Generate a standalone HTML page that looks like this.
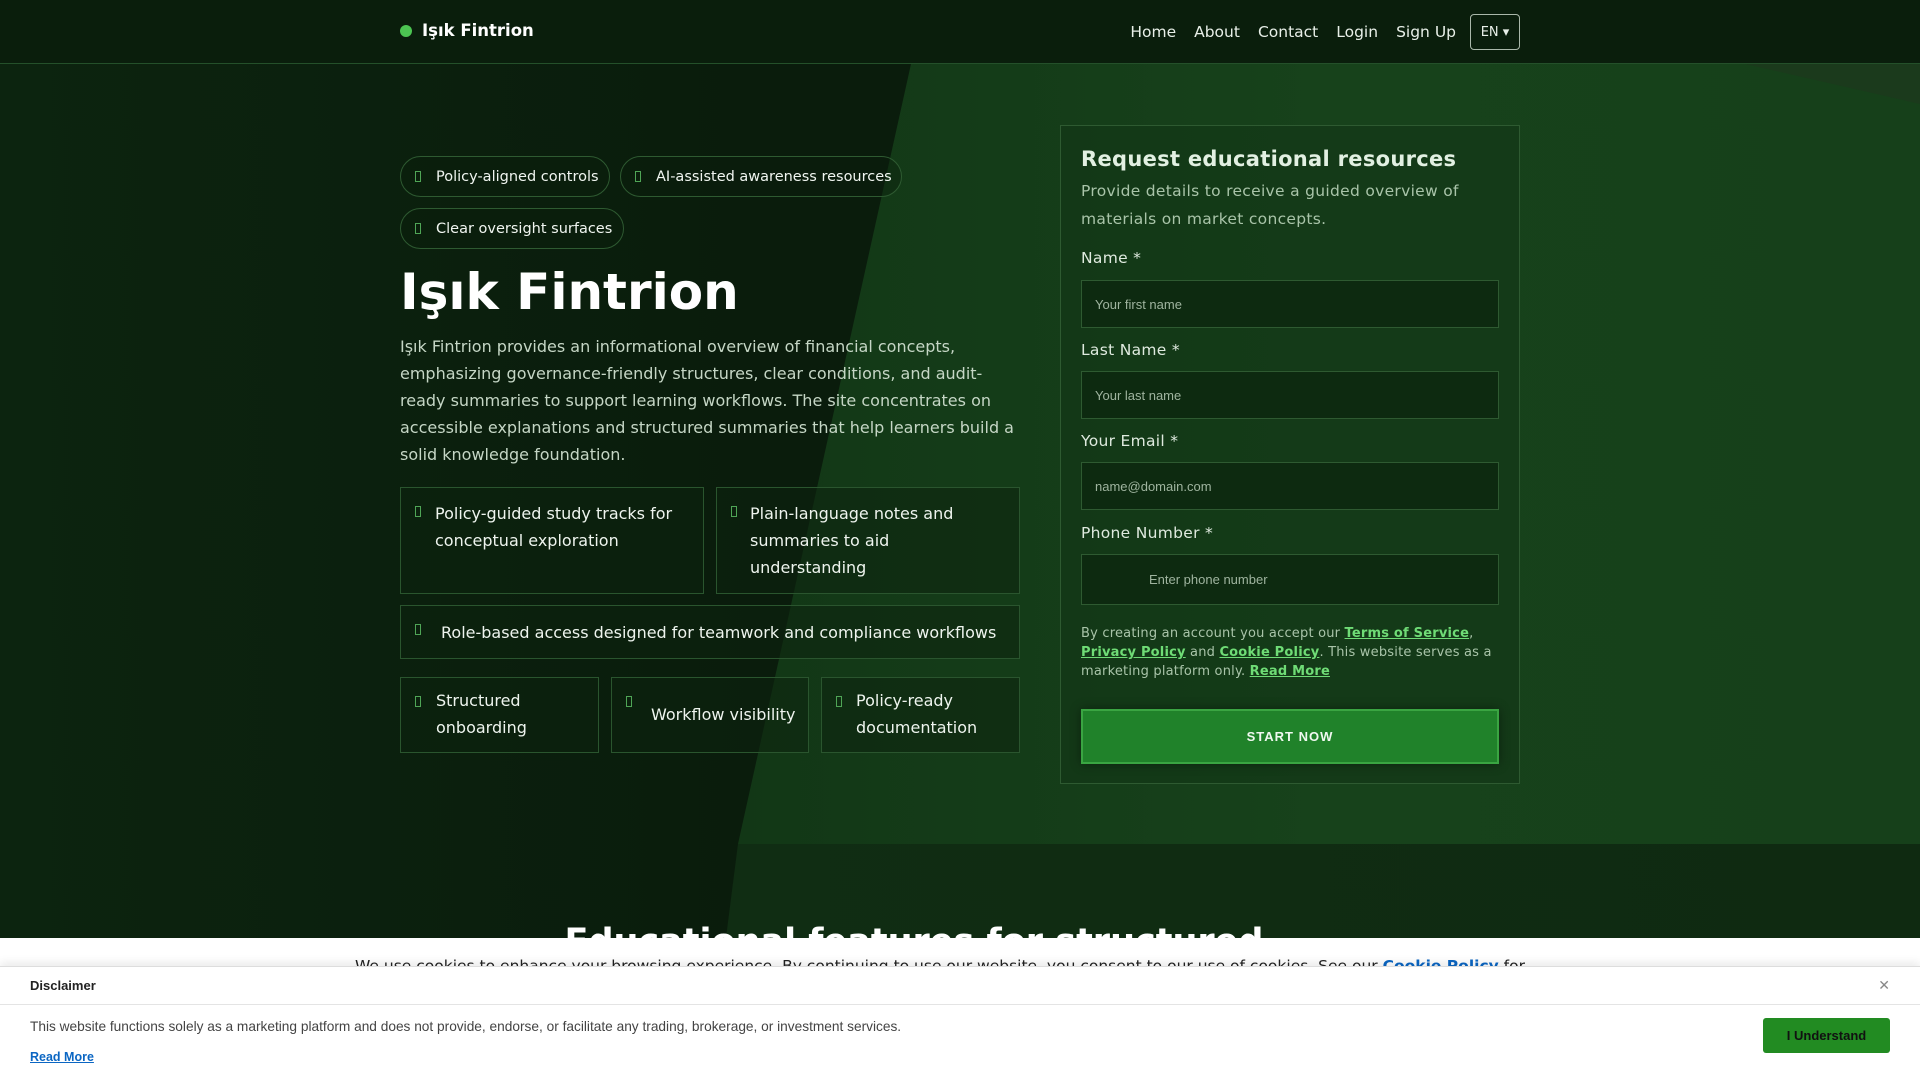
<!DOCTYPE html>
<html><head><meta charset="utf-8"><style>
*{box-sizing:border-box;margin:0;padding:0}
body{width:1920px;height:1080px;overflow:hidden;background:#0c220e;font-family:"DejaVu Sans","Liberation Sans",sans-serif;color:#e6f0e6;position:relative}
.hdr{position:absolute;top:0;left:0;width:1920px;height:64px;background:#0a1e0c;border-bottom:1px solid #24502a;z-index:3}
.logo{position:absolute;left:400px;top:21px;font-weight:bold;font-size:16.5px;color:#fff;display:flex;align-items:center}
.logo i{width:12px;height:12px;border-radius:50%;background:#4cc552;margin-right:10px;display:inline-block}
.nav{position:absolute;right:400px;top:14px;display:flex;align-items:center;font-size:15.5px;color:#e8efe8}
.nav span{margin-left:18px}
.nav .en{border:1px solid #aab8aa;border-radius:4px;width:50px;height:36px;font-size:13px;display:flex;align-items:center;justify-content:center;margin-left:14px}
.bg{position:absolute;top:64px;left:0;width:1920px;height:874px;overflow:hidden;background:linear-gradient(90deg,#0c240f 0%,#0a1c0c 40%)}
.bg svg{position:absolute;left:0;top:0}
.pill{position:absolute;height:41px;border:1px solid #2e5a31;border-radius:21px;font-size:14.5px;color:#f0f5f0;display:flex;align-items:center;padding-left:35px;background:rgba(10,30,12,.4)}
.pill:before,.fb:before{content:"";position:absolute;left:14px;width:4px;height:9px;border:1px solid #4fa556}
h1{position:absolute;left:400px;top:263px;font-size:50px;font-weight:bold;color:#fff}
.p{position:absolute;left:400px;top:333px;width:620px;font-size:16px;line-height:27px;color:#c5d6c5}
.fb{position:absolute;border:1px solid #2a552e;background:rgba(12,35,14,.55);font-size:16px;line-height:27px;color:#eef4ee}
.fb:before{top:18px}
.card{position:absolute;left:1060px;top:125px;width:460px;height:659px;border:1px solid #2e5a31;background:rgba(18,52,21,.55);padding:21px 20px}
.card h2{font-size:21px;font-weight:bold;color:#e2f0e2;letter-spacing:.3px}
.card .sub{font-size:15.5px;line-height:28px;color:#a9c4a9;margin-top:6px;letter-spacing:.3px}
.lbl{position:absolute;left:20px;font-size:15.5px;color:#dfeadf;letter-spacing:.3px}
.inp{position:absolute;left:20px;width:418px;border:1px solid #2e5a31;background:#0d2a10;font-family:"Liberation Sans",sans-serif;font-size:13px;color:#9fb49f;padding-left:13px;display:flex;align-items:center}
.terms{position:absolute;left:20px;top:498px;width:420px;font-size:13px;line-height:19px;color:#a9c4a9;letter-spacing:.2px}
.terms b{color:#6fdc76;text-decoration:underline}
.btn{position:absolute;left:20px;top:583px;width:418px;height:55px;background:#20822a;border:2px solid #3aa542;color:#f0f8f0;font-family:"Liberation Sans",sans-serif;font-weight:bold;font-size:13px;letter-spacing:1px;display:flex;align-items:center;justify-content:center;box-shadow:0 0 10px rgba(0,0,0,.4)}
.sec{position:absolute;top:922px;left:0;width:1828px;text-align:center;font-size:35px;font-weight:bold;color:#fff}
.ck{position:absolute;top:938px;left:0;width:1920px;height:142px;background:#fff}
.ck .t{position:absolute;top:19px;left:0;width:1880px;text-align:center;font-size:15.5px;color:#222}
.ds{position:absolute;top:966px;left:0;width:1920px;height:114px;background:#fff;border-top:1px solid #ddd;box-shadow:0 -4px 8px rgba(0,0,0,.08);font-family:"Liberation Sans",sans-serif}
.ds .hd{height:38px;border-bottom:1px solid #e4e4e4;font-weight:bold;font-size:13px;color:#222;padding:11px 30px}
.ds .x{position:absolute;right:30px;top:10px;color:#888;font-size:14px}
.ds .bd{position:absolute;left:30px;top:52px;font-size:13.7px;color:#444}
.ds .rm{position:absolute;left:30px;top:83px;font-size:12.5px;font-weight:bold;color:#0b66c3;text-decoration:underline}
.ds .ok{position:absolute;left:1763px;top:51px;width:127px;height:35px;background:#228b22;border-radius:3px;font-weight:bold;font-size:13px;color:#111;display:flex;align-items:center;justify-content:center}
</style></head><body>
<div class="hdr"><div class="logo"><i></i>Işık Fintrion</div>
<div class="nav"><span>Home</span><span>About</span><span>Contact</span><span>Login</span><span>Sign Up</span><div class="en">EN ▾</div></div></div>
<div class="bg">
<svg width="1920" height="874">
<defs><linearGradient id="g" x1="0" y1="0" x2="1" y2="0"><stop offset="0" stop-color="#123716"/><stop offset=".5" stop-color="#17421b"/><stop offset="1" stop-color="#16401a"/></linearGradient>
<linearGradient id="g2" x1="0" y1="0" x2="1" y2="0"><stop offset="0" stop-color="#102d13"/><stop offset="1" stop-color="#0f2a11"/></linearGradient></defs>
<polygon points="911,0 1920,0 1920,780 738,780" fill="url(#g)"/>
<polygon points="738,780 1920,780 1920,874 726,874" fill="url(#g2)"/>
<polygon points="1745,0 1920,0 1920,40" fill="#1b3a1c"/>
</svg>
</div>
<div class="pill" style="left:400px;top:156px;width:210px">Policy-aligned controls</div>
<div class="pill" style="left:620px;top:156px;width:282px">AI-assisted awareness resources</div>
<div class="pill" style="left:400px;top:208px;width:224px">Clear oversight surfaces</div>
<h1>Işık Fintrion</h1>
<div class="p">Işık Fintrion provides an informational overview of financial concepts, emphasizing governance-friendly structures, clear conditions, and audit-ready summaries to support learning workflows. The site concentrates on accessible explanations and structured summaries that help learners build a solid knowledge foundation.</div>
<div class="fb" style="left:400px;top:487px;width:304px;height:107px;padding:12px 20px 0 34px">Policy-guided study tracks for conceptual exploration</div>
<div class="fb" style="left:716px;top:487px;width:304px;height:107px;padding:12px 20px 0 33px">Plain-language notes and summaries to aid understanding</div>
<div class="fb" style="left:400px;top:605px;width:620px;height:54px;padding:13px 0 0 40px">Role-based access designed for teamwork and compliance workflows</div>
<div class="fb" style="left:400px;top:677px;width:199px;height:76px;padding:9px 0 0 35px">Structured onboarding</div>
<div class="fb" style="left:611px;top:677px;width:198px;height:76px;padding:23px 0 0 39px">Workflow visibility</div>
<div class="fb" style="left:821px;top:677px;width:199px;height:76px;padding:9px 0 0 34px">Policy-ready documentation</div>
<div class="card"><h2>Request educational resources</h2>
<div class="sub">Provide details to receive a guided overview of materials on market concepts.</div>
<div class="lbl" style="top:123px">Name *</div><div class="inp" style="top:154px;height:48px">Your first name</div>
<div class="lbl" style="top:215px">Last Name *</div><div class="inp" style="top:245px;height:48px">Your last name</div>
<div class="lbl" style="top:306px">Your Email *</div><div class="inp" style="top:336px;height:48px">name@domain.com</div>
<div class="lbl" style="top:398px">Phone Number *</div><div class="inp" style="top:428px;height:51px;padding-left:67px">Enter phone number</div>
<div class="terms">By creating an account you accept our <b>Terms of Service</b>, <b>Privacy Policy</b> and <b>Cookie Policy</b>. This website serves as a marketing platform only. <b>Read More</b></div>
<div class="btn">START NOW</div></div>
<div class="sec">Educational features for structured</div>
<div class="ck"><div class="t">We use cookies to enhance your browsing experience. By continuing to use our website, you consent to our use of cookies. See our <span style="color:#0b66c3;font-weight:bold">Cookie Policy</span> for</div></div>
<div class="ds"><div class="hd">Disclaimer</div><div class="x">✕</div>
<div class="bd">This website functions solely as a marketing platform and does not provide, endorse, or facilitate any trading, brokerage, or investment services.</div>
<div class="rm">Read More</div><div class="ok">I Understand</div></div>
</body></html>
